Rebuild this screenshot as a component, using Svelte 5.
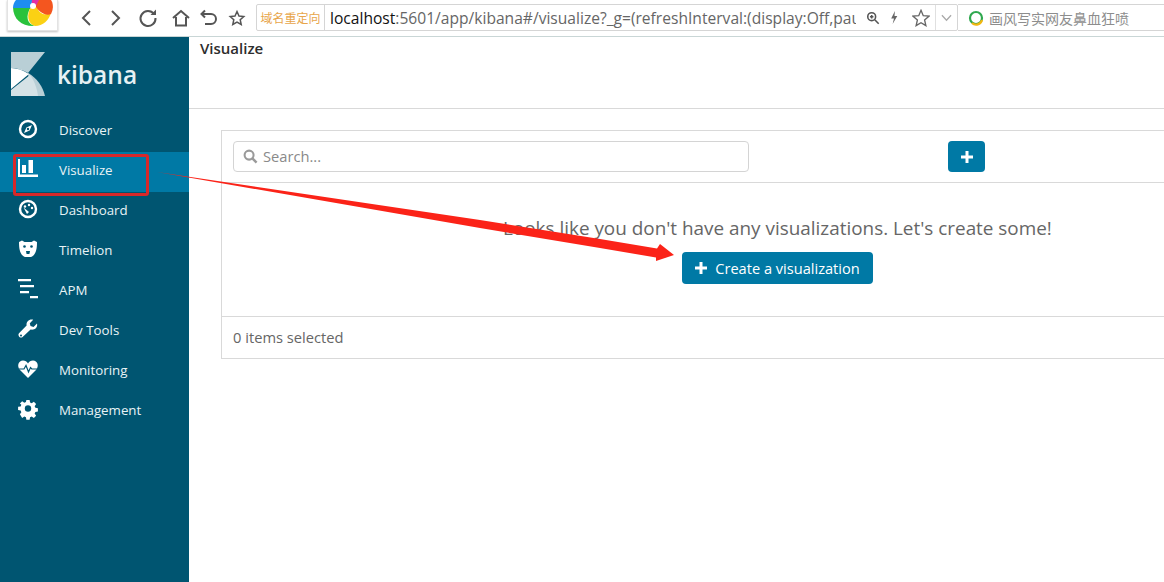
<script>
  const navItems = [
    { label: 'Discover', icon: 'discover' },
    { label: 'Visualize', icon: 'visualize', active: true },
    { label: 'Dashboard', icon: 'dashboard' },
    { label: 'Timelion', icon: 'timelion' },
    { label: 'APM', icon: 'apm' },
    { label: 'Dev Tools', icon: 'tools' },
    { label: 'Monitoring', icon: 'monitoring' },
    { label: 'Management', icon: 'management' }
  ];
</script>

{#snippet navIcon(name)}
  <svg class="nav-icon" viewBox="0 0 20 20" aria-hidden="true">
    {#if name === 'discover'}
      <circle cx="10" cy="10" r="8" fill="none" stroke="#fff" stroke-width="2.4" />
      <path d="M14 6 L11.6 11.6 L6 14 L8.4 8.4 Z" fill="#fff" />
      <circle cx="10" cy="10" r="1.2" fill="#005571" />
    {:else if name === 'visualize'}
      <path d="M0 0h2v15.5h18v2.5H0z M4 6h4v8H4z M10.5 1h4.5v13h-4.5z" fill="#fff" />
    {:else if name === 'dashboard'}
      <circle cx="10" cy="10" r="8" fill="none" stroke="#fff" stroke-width="2.4" />
      <path d="M5.5 8.5 L11 13 L9 15 Z" fill="#fff" />
      <circle cx="7" cy="7.5" r="1.2" fill="#fff" />
      <circle cx="11" cy="6" r="1.2" fill="#fff" />
      <circle cx="14" cy="9" r="1.2" fill="#fff" />
    {:else if name === 'timelion'}
      <path d="M1 3 L4 1.5 L6.5 3 H13.5 L16 1.5 L19 3 C19 10 18 16 13 18 H7 C2 16 1 10 1 3 Z" fill="#fff" />
      <circle cx="6.5" cy="7.5" r="1.3" fill="#005571" />
      <circle cx="13.5" cy="7.5" r="1.3" fill="#005571" />
      <path d="M8 12 h4 l-.6 3 h-2.8 z" fill="#005571" />
    {:else if name === 'apm'}
      <path d="M0 0h13v2.2H0z M2 6h14v2.2H2z M2 12h9v2.2H2z M12 17h8v2.2h-8z" fill="#fff" />
    {:else if name === 'tools'}
      <path d="M19 4.5 L15.5 8 L12.5 7 L11.8 4.2 L15.2 .8 C11.5 -.2 8 2.5 8.6 6.6 L1 14.2 C-.8 16.2 2.2 20 4.6 18 L12.6 10.6 C16.6 11.4 20 8.4 19 4.5 Z" fill="#fff" />
      <circle cx="3" cy="16.4" r="1" fill="#005571" />
    {:else if name === 'monitoring'}
      <path d="M10 19 L2 11 C-1.5 7 .5 1.5 5 1.5 C7.2 1.5 9 2.8 10 4.5 C11 2.8 12.8 1.5 15 1.5 C19.5 1.5 21.5 7 18 11 Z" fill="#fff" />
      <path d="M1 10 H6 L8 6.5 L10.5 13 L12.5 8.5 L13.8 10 H19" fill="none" stroke="#005571" stroke-width="1.2" />
    {:else}
      <path d="M8.2 0h3.6l.5 2.8 1.8.8 2.4-1.6 2.5 2.5-1.6 2.4.8 1.8 2.8.5v3.6l-2.8.5-.8 1.8 1.6 2.4-2.5 2.5-2.4-1.6-1.8.8-.5 2.8H8.2l-.5-2.8-1.8-.8-2.4 1.6L1 15.9l1.6-2.4-.8-1.8L-1 11.2V7.6l2.8-.5.8-1.8L1 3.9l2.5-2.5 2.4 1.6 1.8-.8z" fill="#fff" transform="translate(1 1) scale(.9)" />
      <circle cx="10" cy="9.5" r="3.2" fill="#005571" />
    {/if}
  </svg>
{/snippet}

<div class="page">
  <header class="browser">
    <div class="app-tile">
      <svg viewBox="0 0 51 31" width="51" height="31" aria-hidden="true">
        <path d="M6 7 C6 20 16 27 28 26 C20 24 18 16 24 7 Z" fill="#29c23c" />
        <path d="M28 26 C36 26 42 20 44 13 C38 16 32 14 30 7 L24 7 C19 15 21 24 28 26 Z" fill="#fbd114" />
        <path d="M44 14 C47 8 46 3 44 0 H30 L28 5 C30 10 38 17 44 14 Z" fill="#f4561f" />
        <path d="M24 0 H32 L29 6 L25 6 Z" fill="#e22fa6" />
        <path d="M9 0 H25 L24 8 L6 8 C6 5 7 2 9 0 Z" fill="#1e8df0" />
        <circle cx="26" cy="6" r="3" fill="#fff" />
      </svg>
    </div>
    <div class="tool-icons">
      <svg class="tb" viewBox="0 0 20 20"><path d="M13 3 L6 10 L13 17" /></svg>
      <svg class="tb" viewBox="0 0 20 20"><path d="M7 3 L14 10 L7 17" /></svg>
      <svg class="tb wide" viewBox="0 0 20 20"><path d="M16 6 A7.5 7.5 0 1 0 17.5 10" /><path class="solid" d="M12.5 7 H18 V1.5 Z" /></svg>
      <svg class="tb wide" viewBox="0 0 20 20"><path d="M2 10 L10 3 L18 10 M5 9 V17.5 H15 V9" /></svg>
      <svg class="tb" viewBox="0 0 20 20"><path d="M6 2.5 L2.5 6 L6 9.5 M3 6 H12 A5 5 0 0 1 12 16 H6" /></svg>
      <svg class="tb thin" viewBox="0 0 20 20"><path d="M10 3.5 L12 8 L16.8 8.5 L13.2 11.7 L14.2 16.4 L10 14 L5.8 16.4 L6.8 11.7 L3.2 8.5 L8 8 Z" /></svg>
    </div>
    <div class="address">
      <span class="redirect">域名重定向</span>
      <span class="url"><b>localhost</b>:5601/app/kibana#/visualize?_g=(refreshInterval:(display:Off,pau</span>
      <div class="addr-icons">
        <svg class="tb zoom-i" viewBox="0 0 16 16"><circle cx="6.5" cy="6.5" r="4.5" /><path d="M10 10 L14.5 14.5 M4.5 6.5 H8.5 M6.5 4.5 V8.5" /></svg>
        <svg class="bolt" viewBox="0 0 10 16"><path d="M6 1 L2 9 H5 L3.5 15 L8.5 6.5 H5.5 Z" /></svg>
        <svg class="tb thin star" viewBox="0 0 20 20"><path d="M10 1.5 L12.5 7.4 L18.8 8 L14 12.2 L15.4 18.5 L10 15.2 L4.6 18.5 L6 12.2 L1.2 8 L7.5 7.4 Z" /></svg>
      </div>
      <div class="drop"><svg viewBox="0 0 12 8"><path d="M1 1 L6 6.5 L11 1" /></svg></div>
    </div>
    <div class="search-box">
      <svg viewBox="0 0 16 16" width="16" height="16" aria-hidden="true">
        <circle cx="8" cy="8" r="6" fill="none" stroke="#2fa84f" stroke-width="2.2" />
        <path d="M4 13 A6 6 0 0 0 14 10" fill="none" stroke="#f2b711" stroke-width="2.2" />
      </svg>
      <span>画风写实网友鼻血狂喷</span>
    </div>
  </header>

  <div class="body">
    <aside class="sidebar">
      <div class="brand">
        <svg class="k-logo" viewBox="0 0 34 44" aria-hidden="true">
          <path d="M0 0 H34 L17 21 C12 18 6 16 0 16 Z" fill="#b9cfd6" />
          <path d="M17 21 C26 26 32 35 34 44 H20 Z" fill="#b9cfd6" />
          <path d="M0 16 C6 16 12 18 18 22 L0 37 Z" fill="#fff" />
          <path d="M0 38 L19 23 C23 28 26 36 27 44 H0 Z" fill="#d5e2e6" />
        </svg>
        <span class="wordmark">kibana</span>
      </div>
      <nav>
        {#each navItems as item}
          <div class="nav-row" class:active={item.active}>
            {@render navIcon(item.icon)}
            <span>{item.label}</span>
          </div>
        {/each}
      </nav>
    </aside>

    <main class="main">
      <div class="title-bar">Visualize</div>
      <div class="content">
        <section class="panel">
          <div class="panel-tools">
            <div class="search">
              <svg viewBox="0 0 16 16" width="15" height="15" aria-hidden="true">
                <circle cx="6.5" cy="6.5" r="4.8" fill="none" stroke="#9a9a9a" stroke-width="2.2" />
                <path d="M10 10 L14.5 14.5" stroke="#9a9a9a" stroke-width="2.6" />
              </svg>
              <span>Search...</span>
            </div>
            <button class="add" type="button">
              <svg viewBox="0 0 12 12" width="12" height="12"><path d="M4.5 0h3v4.5H12v3H7.5V12h-3V7.5H0v-3h4.5z" fill="#fff" /></svg>
            </button>
          </div>
          <div class="panel-empty">
            <p>Looks like you don't have any visualizations. Let's create some!</p>
            <button class="create" type="button">
              <svg viewBox="0 0 12 12" width="12" height="12"><path d="M4.5 0h3v4.5H12v3H7.5V12h-3V7.5H0v-3h4.5z" fill="#fff" /></svg>
              Create a visualization
            </button>
          </div>
          <div class="panel-foot">0 items selected</div>
        </section>
      </div>
    </main>
  </div>

  <!-- annotations drawn over the screenshot -->
  <div class="red-box"></div>
  <svg class="arrow" viewBox="0 0 1164 582" aria-hidden="true">
    <path d="M157 172 L480 220 L600 239 L657 248.5 L660 244 L674 255 L656 261 L656 257.5 L600 248 L480 228 Z" fill="#fb2318" />
  </svg>
</div>

<style>
  :global(body) {
    margin: 0;
    background: #fff;
    overflow: hidden;
  }

  .page {
    position: relative;
    width: 1164px;
    height: 582px;
    overflow: hidden;
    display: flex;
    flex-direction: column;
    font-family: 'Open Sans', sans-serif;
    color: #2d2d2d;
  }

  .browser {
    flex: 0 0 36px;
    box-sizing: border-box;
    display: flex;
    align-items: flex-start;
    background: #fff;
    border-bottom: 1px solid #c9d6d6;
  }

  .app-tile {
    box-sizing: border-box;
    width: 51px;
    height: 31px;
    margin-left: 7px;
    border: 1px solid #e3e3e3;
    border-top: 0;
    box-shadow: 0 1px 2px rgba(0, 0, 0, 0.25);
    display: flex;
    justify-content: center;
    overflow: hidden;
  }

  .app-tile svg {
    flex: none;
  }

  .tool-icons {
    display: flex;
    align-items: center;
    gap: 8px;
    height: 36px;
    margin-left: 19px;
    padding-bottom: 1px;
    box-sizing: border-box;
  }

  .tb {
    width: 20px;
    height: 20px;
    fill: none;
    stroke: #555;
    stroke-width: 2;
    flex: none;
  }

  .tb.wide {
    margin-left: 5px;
  }

  .tb.thin {
    stroke-width: 1.5;
  }

  .solid {
    fill: #555;
    stroke: none;
  }

  .address {
    margin-left: 9px;
    margin-top: 4px;
    width: 702px;
    height: 27px;
    box-sizing: border-box;
    border: 1px solid #d5d5d5;
    border-radius: 2px;
    display: flex;
    align-items: center;
    flex: none;
  }

  .redirect {
    flex: none;
    width: 68px;
    height: 100%;
    box-sizing: border-box;
    border-right: 1px solid #d5d5d5;
    font: 12px 'Noto Sans CJK SC', sans-serif;
    line-height: 25px;
    text-align: center;
    color: #e8a54a;
  }

  .url {
    flex: none;
    width: 526px;
    margin-left: 5px;
    overflow: hidden;
    white-space: nowrap;
    font-size: 15.6px;
    color: #666;
  }

  .url b {
    font-weight: 400;
    color: #111;
  }

  .addr-icons {
    flex: none;
    width: 79px;
    display: flex;
    align-items: center;
    padding-left: 10px;
    box-sizing: border-box;
  }

  .zoom-i {
    width: 14px;
    height: 14px;
    stroke-width: 1.8;
  }

  .bolt {
    width: 10px;
    height: 15px;
    margin-left: 9px;
    fill: #666;
  }

  .star {
    margin-left: 13px;
    stroke: #666;
    width: 18px;
    height: 18px;
  }

  .drop {
    flex: none;
    width: 22px;
    height: 100%;
    box-sizing: border-box;
    border-left: 1px solid #e0e0e0;
    display: flex;
    align-items: center;
    justify-content: center;
  }

  .drop svg {
    width: 11px;
    height: 8px;
    fill: none;
    stroke: #aaa;
    stroke-width: 1.4;
  }

  .search-box {
    margin-top: 4px;
    height: 27px;
    box-sizing: border-box;
    flex: 1;
    min-width: 0;
    border-top: 1px solid #d5d5d5;
    border-bottom: 1px solid #d5d5d5;
    display: flex;
    align-items: center;
    gap: 5px;
    padding-left: 10px;
    font: 14px 'Noto Sans CJK SC', sans-serif;
    color: #8d8d8d;
    white-space: nowrap;
  }

  .body {
    flex: 1;
    display: flex;
    min-height: 0;
  }

  .sidebar {
    flex: 0 0 189px;
    background: #005571;
    color: #e8f3f6;
  }

  .brand {
    height: 75px;
    box-sizing: border-box;
    display: flex;
    align-items: flex-start;
    padding: 15px 0 0 11px;
  }

  .k-logo {
    width: 34px;
    height: 44px;
    flex: none;
  }

  .wordmark {
    margin: 6px 0 0 12px;
    font-size: 24.5px;
    font-weight: 600;
    line-height: 34px;
    color: #e6f1f4;
  }

  .nav-row {
    height: 40px;
    box-sizing: border-box;
    padding-bottom: 5px;
    display: flex;
    align-items: center;
    font-size: 13.3px;
    color: #e8f3f6;
  }

  .nav-row.active {
    background: #0079a5;
  }

  .nav-icon {
    width: 20px;
    height: 20px;
    margin: -2px 21px 0 18px;
    flex: none;
    overflow: visible;
  }

  .main {
    flex: 1;
    min-width: 0;
  }

  .title-bar {
    height: 72px;
    box-sizing: border-box;
    padding: 2px 0 0 11px;
    border-bottom: 1px solid #d9d9d9;
    font-size: 15px;
    font-weight: 600;
    line-height: 18px;
    color: #2d2d2d;
  }

  .content {
    padding: 21px 0 0 32px;
  }

  .panel {
    width: 1000px;
    box-sizing: border-box;
    border: 1px solid #d9d9d9;
  }

  .panel-tools {
    height: 52px;
    box-sizing: border-box;
    display: flex;
    align-items: center;
    border-bottom: 1px solid #d9d9d9;
    padding: 0 0 0 11px;
  }

  .search {
    width: 516px;
    height: 31px;
    box-sizing: border-box;
    border: 1px solid #d4d4d4;
    border-radius: 4px;
    display: flex;
    align-items: center;
    gap: 5px;
    padding: 0 0 1px 9px;
    font-size: 14.7px;
    color: #8a8a8a;
  }

  .add {
    width: 37px;
    height: 31px;
    margin-left: 199px;
    padding: 0;
    border: 0;
    border-radius: 4px;
    background: #0079a5;
    display: flex;
    align-items: center;
    justify-content: center;
  }

  .panel-empty {
    height: 134px;
    box-sizing: border-box;
    border-bottom: 1px solid #d9d9d9;
    padding-left: 281px;
  }

  .panel-empty p {
    margin: 0;
    padding-top: 33px;
    font-size: 18.9px;
    line-height: 25px;
    color: #666;
    white-space: nowrap;
  }

  .create {
    margin: 11px 0 0 179px;
    width: 191px;
    height: 32px;
    border: 0;
    border-radius: 4px;
    background: #0079a5;
    color: #fff;
    font: 14.6px 'Open Sans', sans-serif;
    display: flex;
    align-items: center;
    justify-content: center;
    gap: 8px;
    padding: 0;
  }

  .panel-foot {
    height: 41px;
    box-sizing: border-box;
    padding-left: 11px;
    font-size: 14.7px;
    line-height: 41px;
    color: #666;
  }

  .red-box {
    position: absolute;
    left: 13px;
    top: 154px;
    width: 136px;
    height: 42px;
    box-sizing: border-box;
    border: 3px solid #d8282a;
    border-radius: 3px;
  }

  .arrow {
    position: absolute;
    inset: 0;
    width: 1164px;
    height: 582px;
    pointer-events: none;
  }
</style>
